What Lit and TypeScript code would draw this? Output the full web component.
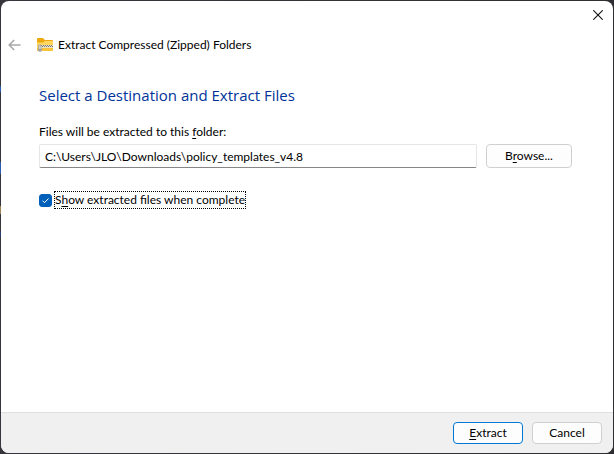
import { LitElement, html, css } from "lit";
import { customElement, state } from "lit/decorators.js";

@customElement("app-root")
class AppRoot extends LitElement {
  static styles = css`
    :host {
      display: block;
      font: 12px/16px Lato, "Open Sans", sans-serif;
      color: #000;
    }
    * {
      box-sizing: border-box;
    }
    .desktop {
      min-height: 100vh;
      padding: 1px;
      display: flex;
      background:
        linear-gradient(#2a5bb0, #2a5bb0) 0 86px / 1px 6px no-repeat,
        linear-gradient(#2a5bb0, #2a5bb0) 0 162px / 1px 12px no-repeat,
        linear-gradient(#a08254, #a08254) 0 206px / 1px 8px no-repeat,
        linear-gradient(#2b3c72, #2b3c72) 0 231px / 1px 6px no-repeat,
        linear-gradient(90deg, #35353b, #2f2f33);
    }
    .dialog {
      flex: 1;
      min-width: 0;
      display: flex;
      flex-direction: column;
      background: #fff;
      border-radius: 8px;
      overflow: hidden;
    }
    .caption {
      display: flex;
      justify-content: flex-end;
      height: 28px;
    }
    button {
      font: inherit;
      color: inherit;
      margin: 0;
      padding: 0;
    }
    .icon-button {
      border: 0;
      background: none;
      display: grid;
      place-items: center;
    }
    .close {
      width: 30px;
      height: 28px;
    }
    .header {
      display: flex;
      align-items: center;
      padding: 0 8px 0 6px;
      height: 32px;
    }
    .back {
      width: 16px;
      height: 16px;
    }
    .folder {
      margin: 0 4px 0 14px;
    }
    .title {
      font-size: 12px;
      font-weight: 400;
      margin: 0;
    }
    svg {
      display: block;
    }
    main {
      flex: 1;
      padding: 23px 41px 16px 38px;
    }
    h2 {
      margin: 0 0 18px;
      font-family: "Open Sans", "Noto Sans", sans-serif;
      font-size: 15px;
      line-height: 22px;
      font-weight: 400;
      color: #003399;
    }
    .label {
      display: block;
      margin-bottom: 4px;
    }
    .row {
      display: flex;
      align-items: center;
      gap: 9px;
    }
    .path {
      flex: 1;
      min-width: 0;
      height: 24px;
      margin: 0;
      padding: 0 5px;
      font: inherit;
      color: inherit;
      background: #fff;
      border: 1px solid #e6e6e6;
      border-bottom-color: #868686;
      border-radius: 2px;
      outline: none;
    }
    .button {
      width: 70px;
      height: 22px;
      background: #fdfdfd;
      border: 1px solid #d0d0d0;
      border-radius: 4px;
      white-space: nowrap;
    }
    .browse {
      width: 86px;
      height: 24px;
    }
    .primary {
      border-color: #0078d4;
    }
    u {
      text-decoration-thickness: 1px;
      text-underline-offset: 2px;
    }
    .check {
      display: flex;
      align-items: center;
      gap: 3px;
      margin-top: 24px;
    }
    .box {
      appearance: none;
      width: 13px;
      height: 13px;
      margin: 0;
      border: 1px solid #868686;
      border-radius: 3px;
      outline: none;
    }
    .box:checked {
      border-color: #005fb8;
      background: #005fb8
        url("data:image/svg+xml,%3Csvg xmlns='http://www.w3.org/2000/svg' viewBox='0 0 11 11'%3E%3Cpath d='M2.5 5.7l2 2 4-4.2' fill='none' stroke='white' stroke-width='1'/%3E%3C/svg%3E")
        center / 11px no-repeat;
    }
    .check label {
      outline: 1px dotted #000;
    }
    footer {
      display: flex;
      justify-content: flex-end;
      gap: 9px;
      padding: 9px 11px;
      border-top: 1px solid #dfdfdf;
      background: #f0f0f0;
    }
  `;

  @state() private path = "C:\\Users\\JLO\\Downloads\\policy_templates_v4.8";
  @state() private showFiles = true;

  render() {
    return html`
      <div class="desktop">
        <section class="dialog" role="dialog" aria-labelledby="title">
          <div class="caption">
            <button class="icon-button close" aria-label="Close">
              <svg width="10" height="10" viewBox="0 0 10 10" fill="none" stroke="#111" stroke-width="1.1">
                <path d="M0.3 0.3 9.7 9.7M9.7 0.3 0.3 9.7" />
              </svg>
            </button>
          </div>
          <header class="header">
            <button class="icon-button back" aria-label="Back">
              <svg width="14" height="12" viewBox="0 0 14 12" fill="none" stroke="#a8a8a8" stroke-width="1.6">
                <path d="M12.500 6H1.500M6.200 1 1.200 6l5 5" />
              </svg>
            </button>
            <svg class="folder" width="17" height="16" viewBox="0 0 17 16" aria-hidden="true">
              <path d="M0 2q0-1 1-1h4.500q.6 0 1 .4L8 3H15q1 0 1 1v5H0z" fill="#eda90f" />
              <path d="M0 5.500h6L7.700 4H15q1 0 1 1v8q0 1-1 1H1q-1 0-1-1z" fill="#ffd75e" />
              <path d="M0 11h16v2q0 1-1 1H1q-1 0-1-1z" fill="#f8c33b" />
              <path d="M3 8h13v3H3z" fill="#ece3c4" />
              <path d="M4 8.500h12M5 9.500h11" stroke="#777" stroke-dasharray="1 1" />
              <path d="M1.500 8h2.500v2.500l.8 2.500q0 1.500-1.800 1.500t-1.800-1.500l.5-2z" fill="#d4d4d4" stroke="#909090" stroke-width=".6" />
              <path d="M2.500 12h1v1.500h-1z" fill="#555" />
            </svg>
            <h1 class="title" id="title">Extract Compressed (Zipped) Folders</h1>
          </header>
          <main>
            <h2>Select a Destination and Extract Files</h2>
            <label class="label" for="path">Files will be extracted to this <u>f</u>older:</label>
            <div class="row">
              <input
                class="path"
                id="path"
                type="text"
                spellcheck="false"
                .value=${this.path}
                @input=${(e: Event) => (this.path = (e.target as HTMLInputElement).value)}
              />
              <button class="button browse">B<u>r</u>owse...</button>
            </div>
            <div class="check">
              <input
                class="box"
                id="show"
                type="checkbox"
                .checked=${this.showFiles}
                @change=${(e: Event) => (this.showFiles = (e.target as HTMLInputElement).checked)}
              />
              <label for="show">S<u>h</u>ow extracted files when complete</label>
            </div>
          </main>
          <footer>
            <button class="button primary"><u>E</u>xtract</button>
            <button class="button">Cancel</button>
          </footer>
        </section>
      </div>
    `;
  }
}
